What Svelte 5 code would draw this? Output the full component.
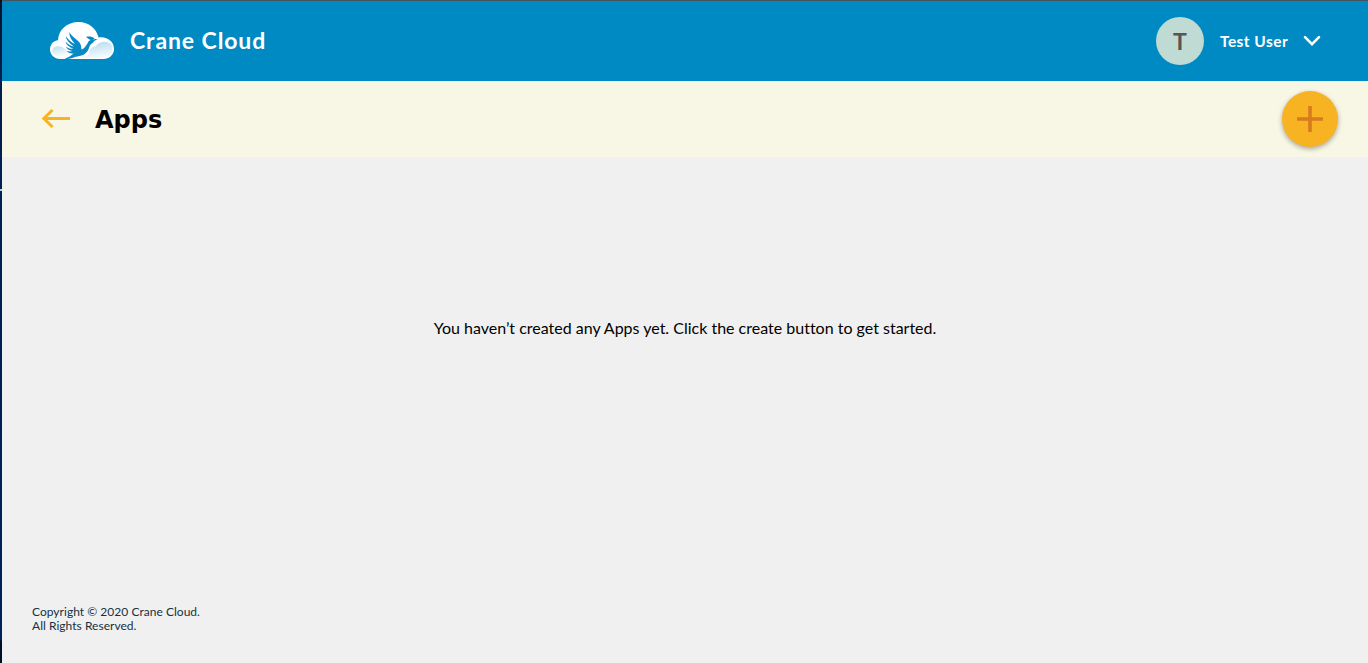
<script>
  const user = { name: 'Test User', initial: 'T' };
</script>

<div class="frame">
  <div class="edge"><i></i></div>
  <div class="page">
    <header class="topbar">
      <a class="brand" href="#home">
        <svg class="logo" viewBox="0 0 64 40" width="64" height="40" aria-hidden="true">
          <defs>
            <linearGradient id="cloudLeft" x1="0" y1="0" x2="0.4" y2="1">
              <stop offset="0" stop-color="#b9dcf0" />
              <stop offset="1" stop-color="#ffffff" />
            </linearGradient>
            <linearGradient id="cloudRight" x1="0.2" y1="0" x2="0.5" y2="1">
              <stop offset="0" stop-color="#b4daef" />
              <stop offset="1" stop-color="#f6fbfe" />
            </linearGradient>
          </defs>
          <path fill="#fff" d="M10 39C4.500 39 0 34.500 0 29.500C0 24.200 3.500 20.700 8 20.200C8.500 9.800 17 2 28.500 2C39 2 46.500 8.500 48.500 17.500C57 16 64 21.500 64 29C64 35 59 39 53.500 39Z" />
          <path fill="url(#cloudLeft)" d="M2.500 29.500C4 25.500 10 25 14.500 28.500C18 31.500 19 33 21 34.500C16 38.500 8 38 4 34.500C2 32.500 2 31 2.500 29.500Z" />
          <path fill="url(#cloudRight)" d="M39 34C39 29 42 26.500 45.500 26.300C50 20.500 59 20.500 62 25.500C64 30 61.500 36.500 54 38H31C34 37.500 37 36.500 39 34Z" />
          <path fill="#0689c6" d="M19.500 12C21 16 26 18.500 29.500 22.500C31.500 25 31.200 28 31.500 29.500C35 28.500 35.500 26 37.500 23.500C38 21 40 20 42 19.700C44 18.700 46 19 47.800 19C46 19.800 45 20.600 44 21.200C43 23.500 40 23.800 39.500 26.500C38 32.500 34 35.500 28.500 36.200C25 36.500 22 39 14.500 39C18 37.500 20.500 36 23.500 33.500C20 33.800 18 32.500 17 31C19 31.700 21 31.500 22.500 31C18.500 30.500 16.500 28.500 16 26.500C18 28.500 21 29 23.500 28.700C18.500 27 16 24 15.500 21.500C18 24.500 21 26 24 26.500C19 23 16 19.500 15.800 16C18.500 20 21.500 22.500 25 24C21 19.500 19 16 19.500 12Z" />
          <path fill="#0689c6" d="M36 17C39 16.300 42 16.300 44.500 18.600L41.500 20.500C39.500 19.800 38 18.500 36 17Z" />
        </svg>
        <span class="brand-name">Crane Cloud</span>
      </a>
      <button class="account">
        <span class="avatar"><span>{user.initial}</span></span>
        <span class="username">{user.name}</span>
        <svg class="chevron" viewBox="0 0 18 12" width="18" height="12" aria-hidden="true">
          <path d="M2 2.200L9 9.200L16 2.200" fill="none" stroke="#fff" stroke-width="2.600" stroke-linecap="round" />
        </svg>
      </button>
    </header>

    <section class="heading">
      <div class="title">
        <a class="back" href="#back" aria-label="Back">
          <svg viewBox="0 0 28 20" width="28" height="20">
            <path d="M28 9.500H2M10.500 1L1.900 9.500L10.500 18" fill="none" stroke="#f7b322" stroke-width="3" />
          </svg>
        </a>
        <h1>Apps</h1>
      </div>
      <button class="add" aria-label="Create">
        <svg viewBox="0 0 26 26" width="26" height="26">
          <path d="M13 0V26M0 13H26" stroke="#d67b1e" stroke-width="3.600" />
        </svg>
      </button>
    </section>

    <main><p>You haven’t created any Apps yet. Click the create button to get started.</p></main>

    <footer>
      <div class="copyright">Copyright © 2020 Crane Cloud.</div>
      <div class="rights">All Rights Reserved.</div>
    </footer>
  </div>
</div>

<style>
  :global(body) { background: #f0f0f0; overflow: hidden; }
  * { box-sizing: border-box; }
  button { border: 0; padding: 0; background: none; font: inherit; }
  a { color: inherit; text-decoration: none; }
  svg { display: block; }
  .frame { display: flex; height: 663px; font-family: Lato, "Liberation Sans", sans-serif; font-variant-ligatures: none; background: #f0f0f0; }
  .edge { width: 2px; background: linear-gradient(#001329 0, #001f50 80px, #00205a 640px, #000e26 641px); padding-top: 189px; }
  .edge i { display: block; height: 2px; background: #c0c8d6; }
  .page { flex: 1; display: flex; flex-direction: column; }
  .topbar { height: 81px; border-top: 1px solid #43545e; background: #008ac4; color: #fff; display: flex; justify-content: space-between; align-items: center; padding: 0 47px 0 48px; }
  .brand { display: flex; align-items: center; gap: 16px; padding-bottom: 2px; }
  .brand-name { font-size: 23px; font-weight: 700; letter-spacing: 0.900px; white-space: nowrap; }
  .account { display: flex; align-items: center; color: #fff; }
  .avatar { width: 48px; height: 48px; border-radius: 50%; background: #bfdbd3; color: #555; display: grid; place-items: center; font-size: 23px; font-weight: 700; }
  .username { width: 68px; margin: 0 15px 0 16px; padding-bottom: 1px; font-size: 15.500px; letter-spacing: 0.450px; font-weight: 700; white-space: nowrap; text-align: left; }
  .heading { height: 76px; background: #f8f6e4; display: flex; justify-content: space-between; align-items: center; padding: 0 30px 0 40px; }
  .title { display: flex; align-items: center; gap: 25px; }
  h1 { margin: 0; padding-top: 2px; font: 700 24px/28px "DejaVu Sans", sans-serif; }
  .add { width: 56px; height: 56px; border-radius: 50%; background: #f7b322; display: grid; place-items: center; box-shadow: 0 2px 5px rgba(0, 0, 0, 0.320); }
  main { flex: 1; padding-top: 161px; text-align: center; }
  p { margin: 0; font-size: 16px; line-height: 20px; color: #000; white-space: nowrap; }
  footer { height: 58px; padding-left: 30px; font-size: 12px; line-height: 14px; letter-spacing: 0.030px; color: #17303f; }
</style>
